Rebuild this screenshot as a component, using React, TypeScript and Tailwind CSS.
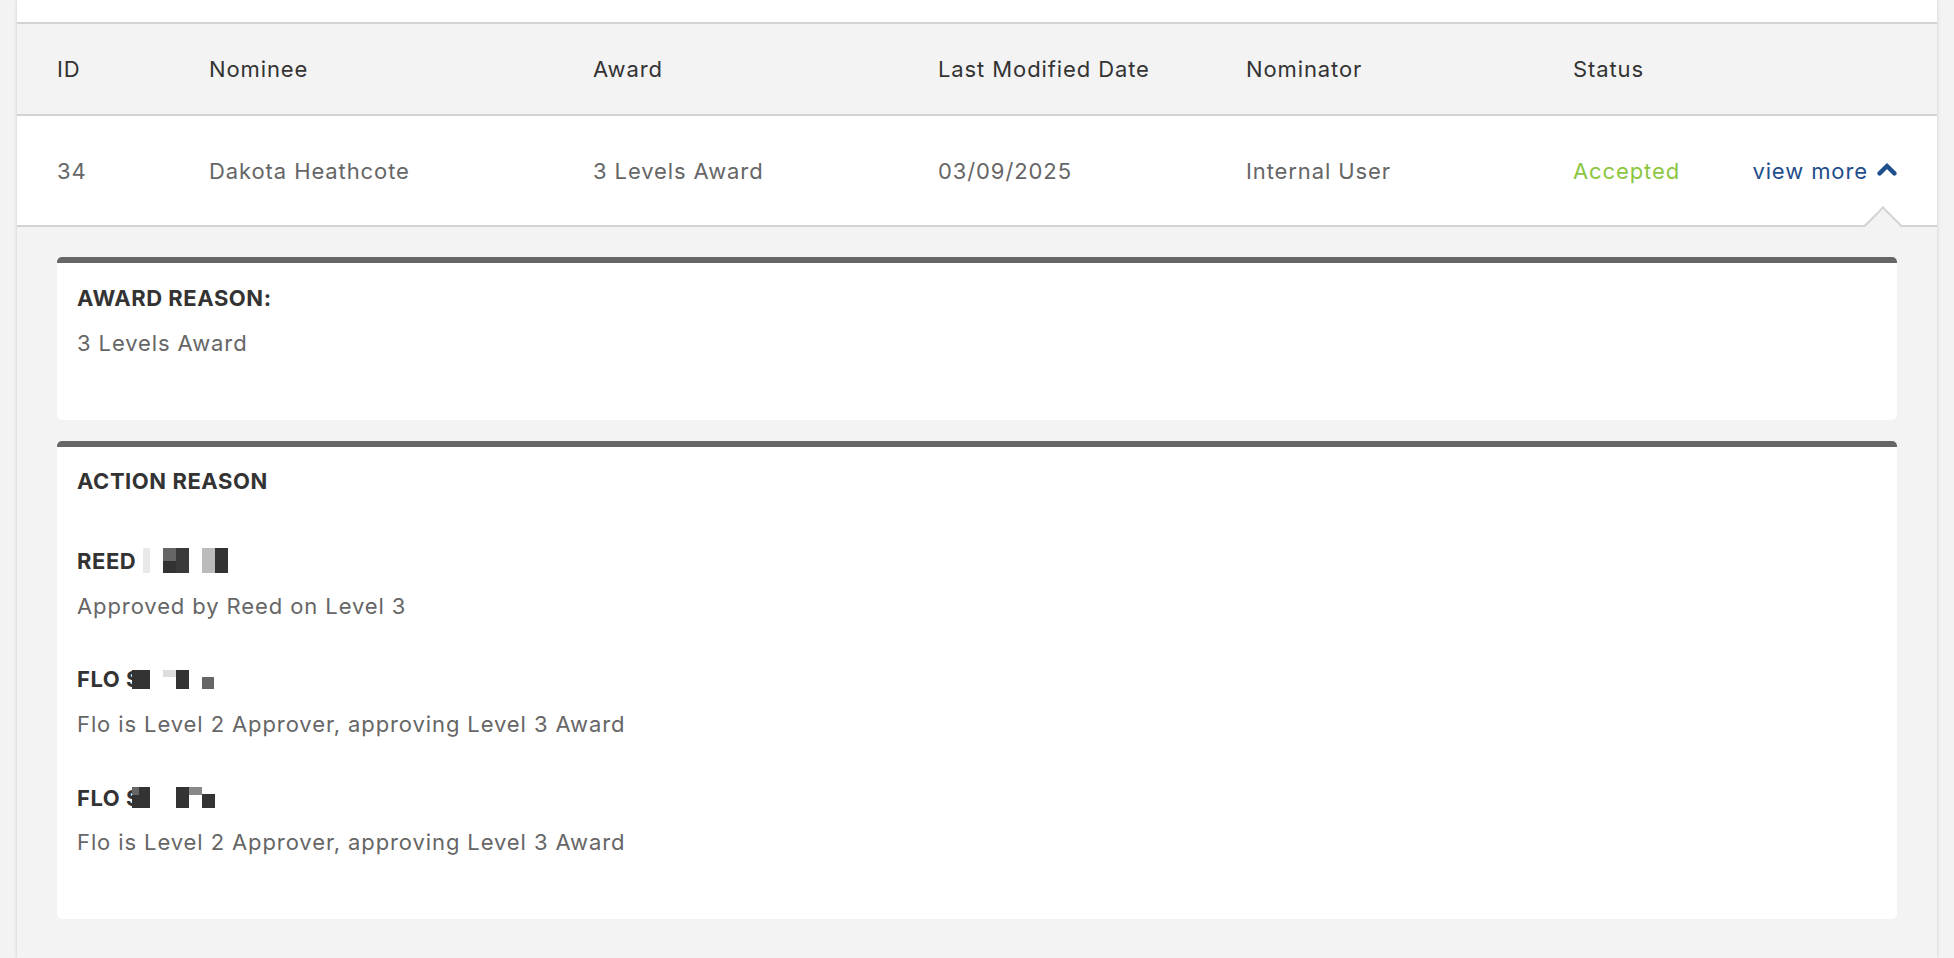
import React from "react";

function ChevronUp() {
  return (
    <svg width="20" height="14" viewBox="0 0 20 14" className="ml-[9px] mt-[-4px] shrink-0">
      <path d="M2.6 11.4 L10 4 L17.4 11.4" fill="none" stroke="#1f4e8c" strokeWidth="4.4" strokeLinecap="round" strokeLinejoin="miter" />
    </svg>
  );
}

export default function App() {
  return (
    <div className="min-h-[958px] bg-[#f3f3f3] px-[17px] font-['Inter',sans-serif] text-[22px] leading-[30px] tracking-[0.9px]">
      <div className="bg-white shadow-[0_0_4px_rgba(0,0,0,0.16)] min-h-[958px] flex flex-col">
        <div className="h-[24px] bg-white border-b-2 border-[#d3d3d3]" />
        <div className="h-[92px] bg-[#f3f3f3] border-b-2 border-[#d3d3d3] grid grid-cols-[152px_384px_345px_308px_327px_150px_1fr] items-center pl-[40px] pr-[40px] text-[#333]">
          <div>ID</div>
          <div>Nominee</div>
          <div>Award</div>
          <div>Last Modified Date</div>
          <div>Nominator</div>
          <div>Status</div>
          <div />
        </div>
        <div className="relative h-[111px] bg-white border-b-2 border-[#d3d3d3] grid grid-cols-[152px_384px_345px_308px_327px_150px_1fr] items-center pl-[40px] pr-[40px] text-[#666]">
          <div>34</div>
          <div>Dakota Heathcote</div>
          <div>3 Levels Award</div>
          <div>03/09/2025</div>
          <div>Internal User</div>
          <div className="text-[#8cc63f] whitespace-nowrap">Accepted</div>
          <div className="flex items-center justify-end text-[#1f4e8c] whitespace-nowrap">
            <span>view more</span>
            <ChevronUp />
          </div>
          <div className="absolute left-[1852px] top-[96px] w-[28px] h-[28px] rotate-45 bg-[#f3f3f3] border-t-2 border-l-2 border-[#d3d3d3]" />
        </div>
        <div className="flex-1 bg-[#f3f3f3] pt-[30px] px-[40px] pb-[39px] flex flex-col gap-[21px]">
          <div className="bg-white rounded-[5px] border-t-[6px] border-[#666] pt-[20px] pb-[62px] px-[20px]">
            <div className="font-bold text-[#333] tracking-[0.55px]">AWARD REASON:</div>
            <div className="mt-[15px] text-[#666]">3 Levels Award</div>
          </div>
          <div className="bg-white rounded-[5px] border-t-[6px] border-[#666] pt-[19px] pb-[62px] px-[20px]">
            <div className="font-bold text-[#333] tracking-[0.55px]">ACTION REASON</div>

            <div className="relative mt-[50px] h-[30px] font-bold text-[#333] tracking-[0.55px]">
              <span>REED</span>
              <span className="absolute left-[66px] top-[2px] w-[7px] h-[25px] bg-[#e9e9e9]" />
              <span className="absolute left-[86px] top-[2px] w-[13px] h-[13px] bg-[#666]" />
              <span className="absolute left-[86px] top-[15px] w-[13px] h-[12px] bg-[#333]" />
              <span className="absolute left-[99px] top-[2px] w-[13px] h-[25px] bg-[#3a3a3a]" />
              <span className="absolute left-[125px] top-[2px] w-[13px] h-[25px] bg-[#bbb]" />
              <span className="absolute left-[138px] top-[2px] w-[13px] h-[25px] bg-[#333]" />
            </div>
            <div className="mt-[15px] text-[#666]">Approved by Reed on Level 3</div>

            <div className="relative mt-[43px] h-[30px] font-bold text-[#333] tracking-[0.55px] overflow-hidden">
              <span>FLO S</span>
              <span className="absolute left-[55px] top-[6px] w-[18px] h-[19px] bg-[#333]" />
              <span className="absolute left-[73px] top-[0px] w-[80px] h-[30px] bg-white" />
              <span className="absolute left-[86px] top-[6px] w-[13px] h-[7px] bg-[#ddd]" />
              <span className="absolute left-[99px] top-[6px] w-[13px] h-[19px] bg-[#333]" />
              <span className="absolute left-[125px] top-[13px] w-[12px] h-[12px] bg-[#666]" />
            </div>
            <div className="mt-[15px] text-[#666]">Flo is Level 2 Approver, approving Level 3 Award</div>

            <div className="relative mt-[44px] h-[30px] font-bold text-[#333] tracking-[0.55px] overflow-hidden">
              <span>FLO S</span>
              <span className="absolute left-[55px] top-[4px] w-[18px] h-[21px] bg-[#333]" />
              <span className="absolute left-[73px] top-[0px] w-[80px] h-[30px] bg-white" />
              <span className="absolute left-[55px] top-[4px] w-[7px] h-[8px] bg-[#666]" />
              <span className="absolute left-[99px] top-[4px] w-[13px] h-[21px] bg-[#333]" />
              <span className="absolute left-[112px] top-[4px] w-[13px] h-[8px] bg-[#888]" />
              <span className="absolute left-[125px] top-[11px] w-[13px] h-[14px] bg-[#333]" />
            </div>
            <div className="mt-[14px] text-[#666]">Flo is Level 2 Approver, approving Level 3 Award</div>
          </div>
        </div>
      </div>
    </div>
  );
}
